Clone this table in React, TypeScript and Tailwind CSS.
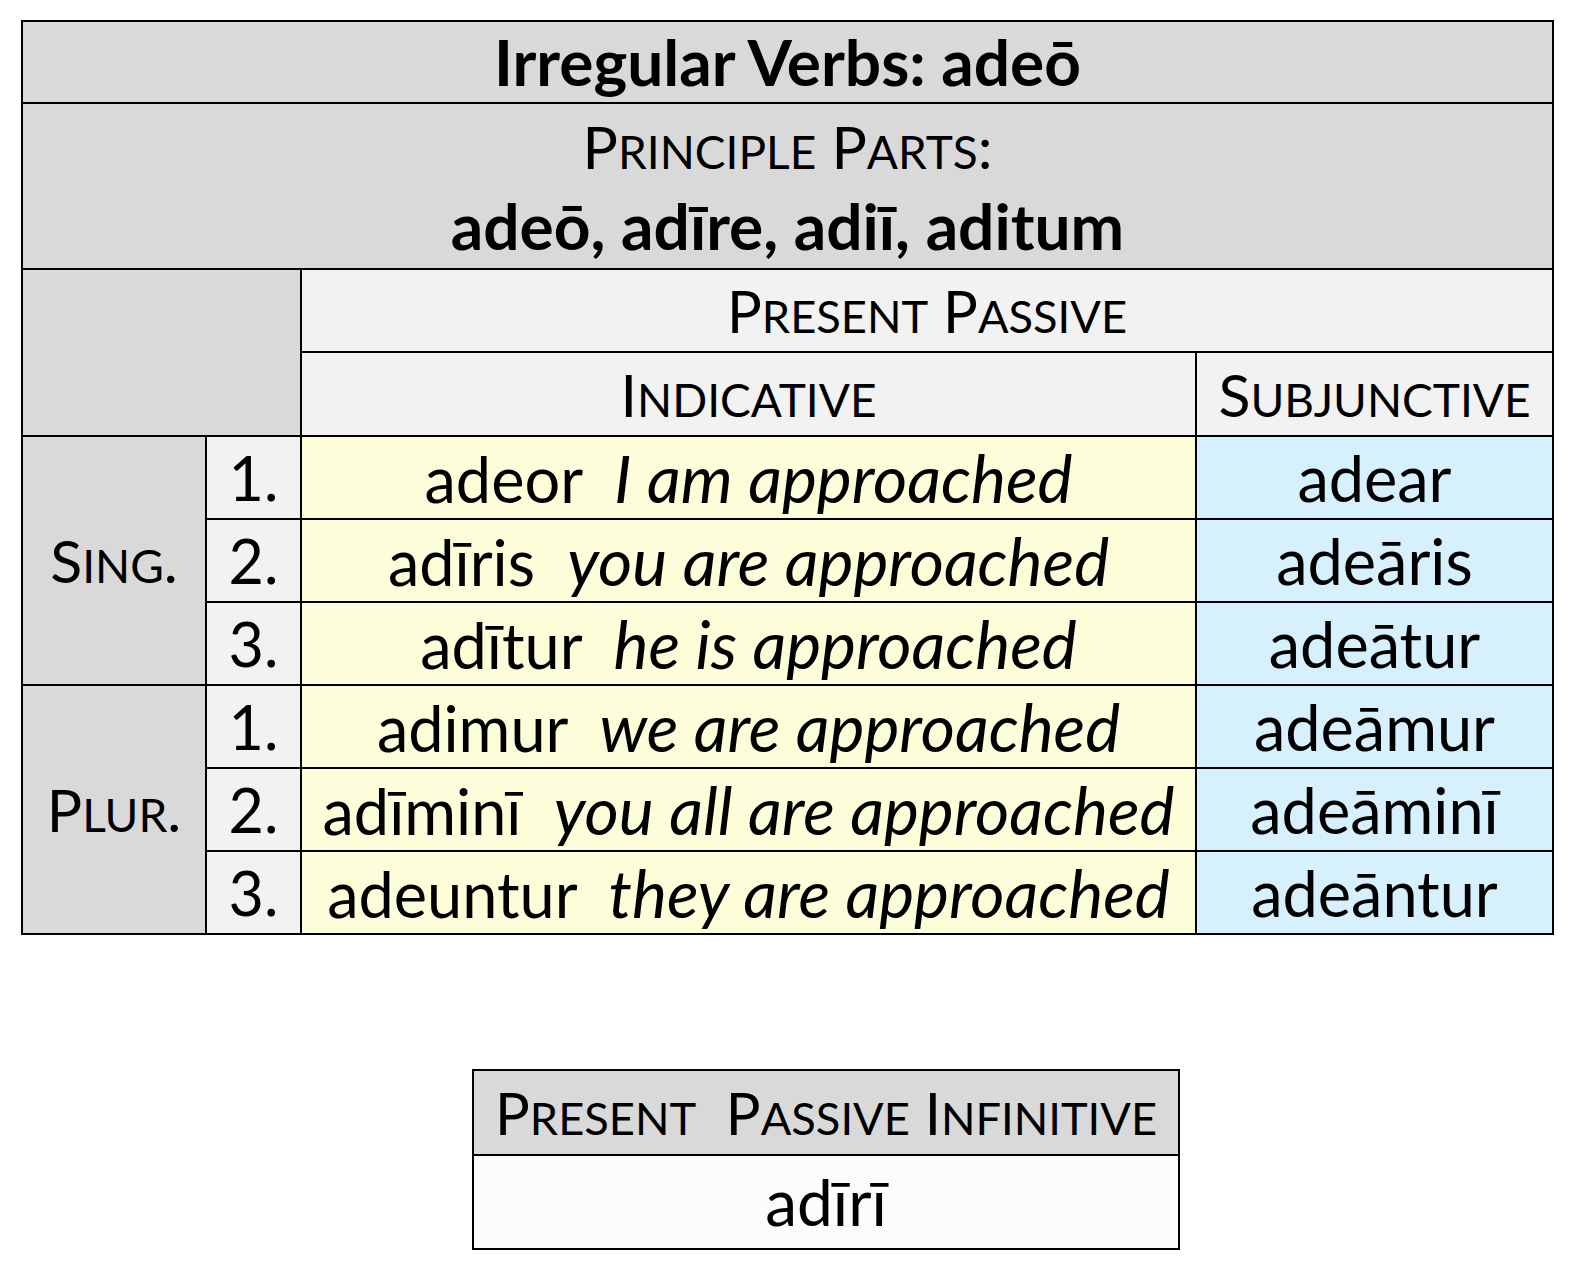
import React from "react";

function SC({ text }: { text: string }) {
  const parts: React.ReactNode[] = [];
  let buf = "";
  let lower = false;
  const flush = (k: number) => {
    if (!buf) return;
    if (lower) parts.push(<span key={k} className="text-[0.78em]">{buf.toUpperCase()}</span>);
    else parts.push(<span key={k}>{buf}</span>);
    buf = "";
  };
  for (let i = 0; i < text.length; i++) {
    const c = text[i];
    const isLower = c !== c.toUpperCase();
    if (isLower !== lower) {
      flush(i);
      lower = isLower;
    }
    buf += c;
  }
  flush(text.length);
  return <span className="whitespace-pre">{parts}</span>;
}

const rows = [
  { grp: "Sing.", n: "1.", lat: "adeor", eng: "I am approached", sub: "adear" },
  { grp: "", n: "2.", lat: "adīris", eng: "you are approached", sub: "adeāris" },
  { grp: "", n: "3.", lat: "adītur", eng: "he is approached", sub: "adeātur" },
  { grp: "Plur.", n: "1.", lat: "adimur", eng: "we are approached", sub: "adeāmur" },
  { grp: "", n: "2.", lat: "adīminī", eng: "you all are approached", sub: "adeāminī" },
  { grp: "", n: "3.", lat: "adeuntur", eng: "they are approached", sub: "adeāntur" },
];

export default function App() {
  const cell = "border-2 border-black text-center align-middle p-0";
  return (
    <div className="w-[1575px] h-[1272px] bg-white text-black font-['Lato',sans-serif] text-[60px] leading-none pt-[20px]">
      <table className="ml-[21px] w-[1531px] table-fixed border-collapse">
        <colgroup>
          <col className="w-[184px]" />
          <col className="w-[95px]" />
          <col className="w-[895px]" />
          <col className="w-[357px]" />
        </colgroup>
        <tbody>
          <tr className="h-[82px]">
            <td colSpan={4} className={`${cell} bg-[#d9d9d9] font-bold text-[64px]`}>
              Irregular Verbs: adeō
            </td>
          </tr>
          <tr className="h-[166px]">
            <td colSpan={4} className="border-2 border-black text-center align-top p-0 bg-[#d9d9d9]">
              <div className="flex flex-col items-center gap-[18px] pt-[13px]">
                <span className="text-[59px]">
                  <SC text="Principle Parts:" />
                </span>
                <span className="font-bold text-[64px]">adeō, adīre, adiī, aditum</span>
              </div>
            </td>
          </tr>
          <tr className="h-[83px]">
            <td colSpan={2} rowSpan={2} className={`${cell} bg-[#d9d9d9]`}></td>
            <td colSpan={2} className={`${cell} bg-[#f2f2f2] text-[58px]`}>
              <SC text="Present Passive" />
            </td>
          </tr>
          <tr className="h-[84px]">
            <td className={`${cell} bg-[#f2f2f2] text-[59px]`}>
              <SC text="Indicative" />
            </td>
            <td className={`${cell} bg-[#f2f2f2] text-[59px]`}>
              <SC text="Subjunctive" />
            </td>
          </tr>
          {rows.map((r, i) => (
            <tr key={i} className="h-[83px]">
              {r.grp && (
                <td rowSpan={3} className={`${cell} bg-[#d9d9d9] text-[59px]`}>
                  <SC text={r.grp} />
                </td>
              )}
              <td className={`${cell} bg-[#f2f2f2] text-[61px]`}>{r.n}</td>
              <td className={`${cell} bg-[#fcfdd9] whitespace-pre text-[63px]`}>
                {r.lat}
                {"  "}
                <i className="text-[66px]">{r.eng}</i>
              </td>
              <td className={`${cell} bg-[#d6f0fd] text-[63px]`}>{r.sub}</td>
            </tr>
          ))}
        </tbody>
      </table>

      <table className="ml-[472px] mt-[134px] w-[708px] table-fixed border-collapse">
        <tbody>
          <tr className="h-[85px]">
            <td className={`${cell} bg-[#d9d9d9] text-[58px]`}>
              <SC text="Present  Passive Infinitive" />
            </td>
          </tr>
          <tr className="h-[94px]">
            <td className={`${cell} bg-[#fcfcff] text-[64px]`}>adīrī</td>
          </tr>
        </tbody>
      </table>
    </div>
  );
}
